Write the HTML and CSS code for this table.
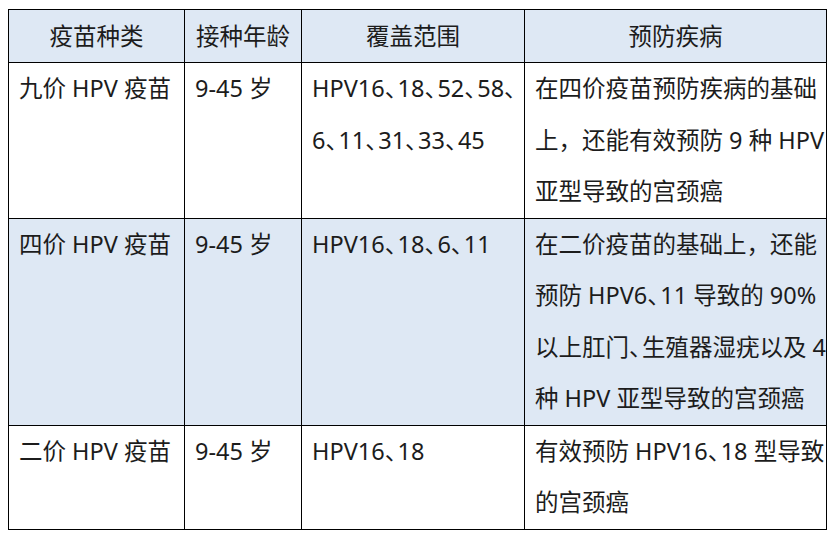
FILE: index.html
```html
<!DOCTYPE html>
<html lang="zh-CN">
<head>
<meta charset="utf-8">
<title>HPV 疫苗对比</title>
<link rel="stylesheet" href="styles.css">
</head>
<body>
<table class="vac">
  <colgroup>
    <col class="c1"><col class="c2"><col class="c3"><col class="c4">
  </colgroup>
  <thead>
    <tr class="head">
      <th>疫苗种类</th>
      <th>接种年龄</th>
      <th>覆盖范围</th>
      <th>预防疾病</th>
    </tr>
  </thead>
  <tbody>
    <tr>
      <td>九价 HPV 疫苗</td>
      <td>9-45 岁</td>
      <td>HPV16<span class="p">、</span>18<span class="p">、</span>52<span class="p">、</span>58<span class="p">、</span><br>6<span class="p">、</span>11<span class="p">、</span>31<span class="p">、</span>33<span class="p">、</span>45</td>
      <td>在四价疫苗预防疾病的基础<br>上，还能有效预防 9 种 HPV<br>亚型导致的宫颈癌</td>
    </tr>
    <tr class="alt">
      <td>四价 HPV 疫苗</td>
      <td>9-45 岁</td>
      <td>HPV16<span class="p">、</span>18<span class="p">、</span>6<span class="p">、</span>11</td>
      <td>在二价疫苗的基础上，还能<br>预防 HPV6<span class="p">、</span>11 导致的 90%<br>以上肛门<span class="p">、</span>生殖器湿疣以及 4<br>种 HPV 亚型导致的宫颈癌</td>
    </tr>
    <tr>
      <td>二价 HPV 疫苗</td>
      <td>9-45 岁</td>
      <td>HPV16<span class="p">、</span>18</td>
      <td>有效预防 HPV16<span class="p">、</span>18 型导致<br>的宫颈癌</td>
    </tr>
  </tbody>
</table>
</body>
</html>
```

FILE: styles.css
```css
html, body {
  margin: 0;
  padding: 0;
  background: #ffffff;
}

body {
  padding: 9px 0 0 8px;
  font-family: "Noto Sans", "Noto Sans CJK SC", sans-serif;
  color: #1c1c1c;
}

.vac {
  border-collapse: collapse;
  table-layout: fixed;
  width: 818px;
  font-size: 23.5px;
  line-height: 51.5px;
}

.c1 { width: 176px; }
.c2 { width: 117px; }
.c3 { width: 223px; }
.c4 { width: 302px; }

.vac th,
.vac td {
  border: 1px solid #000;
  padding: 0 0 0 10px;
  vertical-align: top;
  text-align: left;
  white-space: nowrap;
  overflow: hidden;
}

.vac th {
  font-weight: normal;
  text-align: center;
  padding: 0;
  line-height: 52px;
}

.head,
.alt {
  background: #dee8f4;
}

.p {
  letter-spacing: -0.45em;
}
```
